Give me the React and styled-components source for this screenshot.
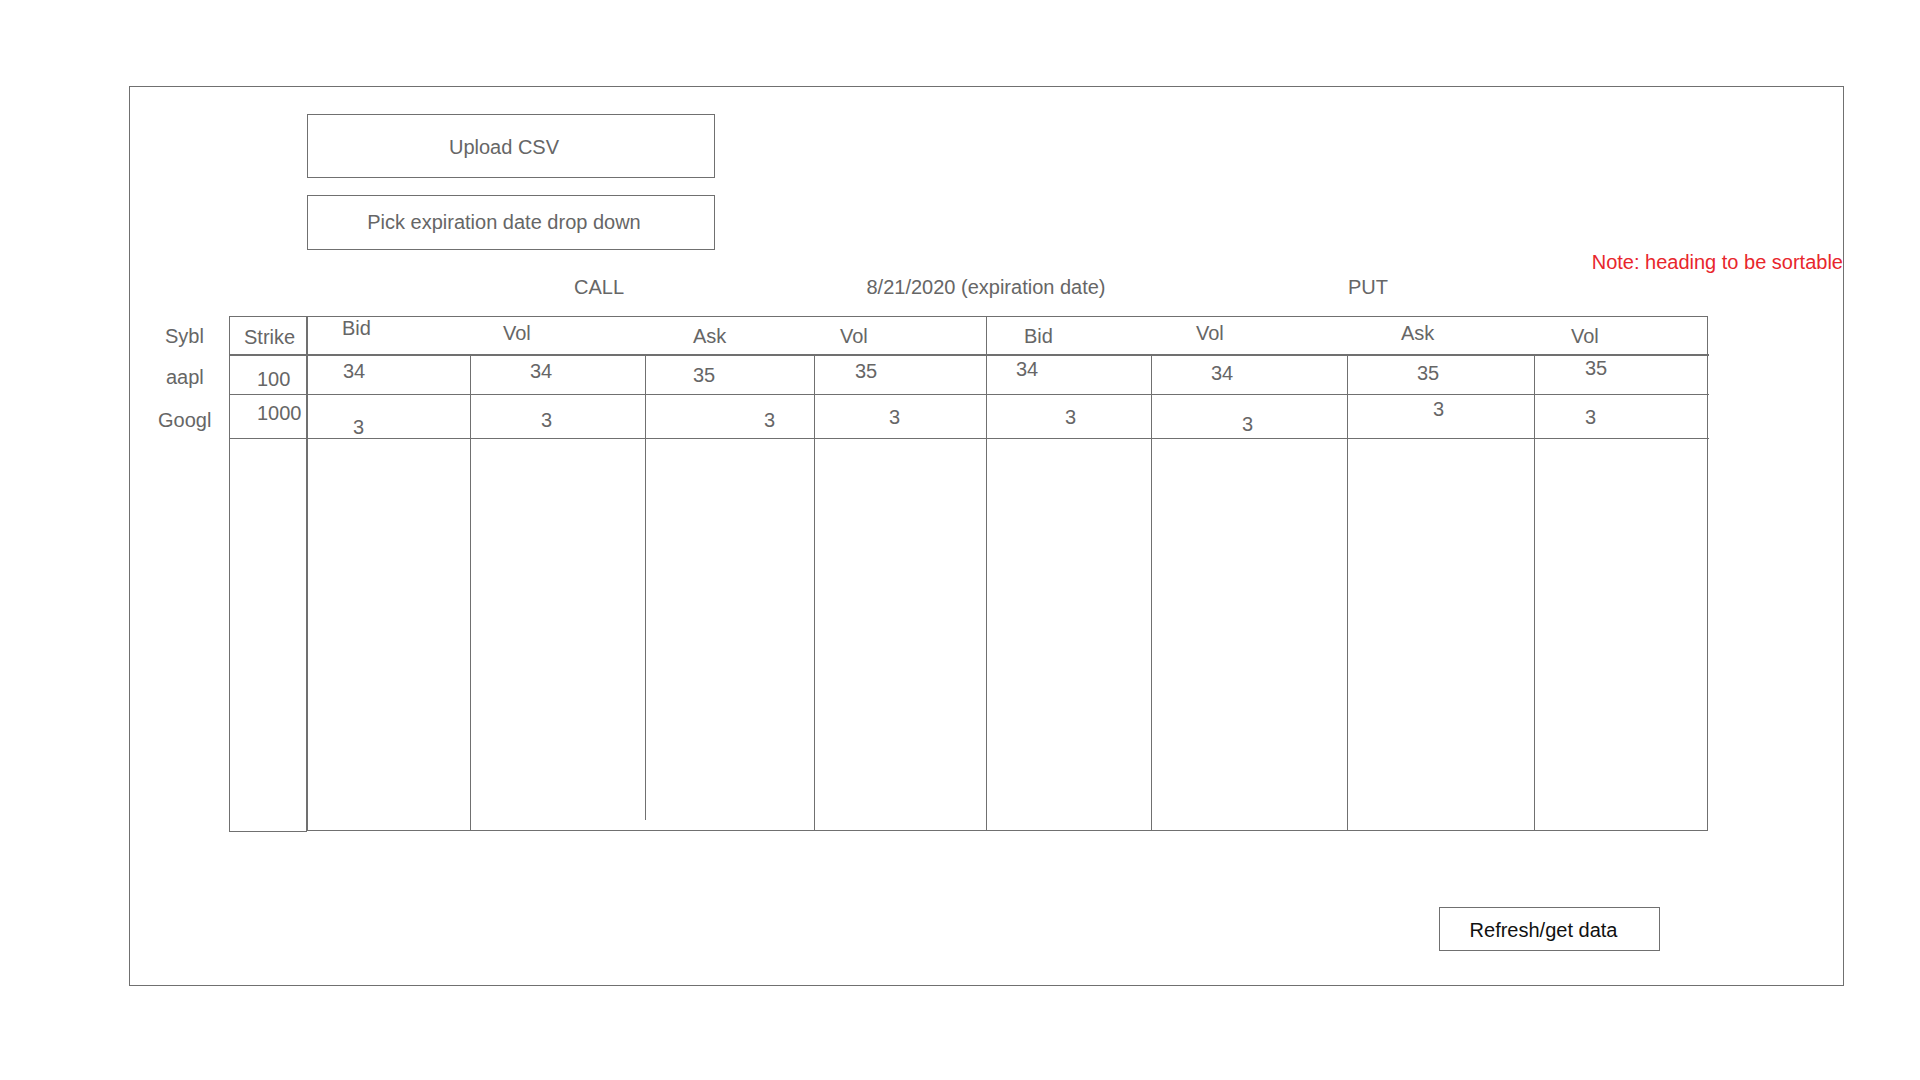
import React from "react";
import styled, { createGlobalStyle } from "styled-components";

const LINE = "#707070";
const TEXT = "#666666";

const GlobalStyle = createGlobalStyle`
  * {
    box-sizing: border-box;
  }
  body {
    margin: 0;
    background: #ffffff;
    font-family: "Liberation Sans", Arial, sans-serif;
  }
`;

// widths of the eight option columns (call bid/vol/ask/vol, put bid/vol/ask/vol)
const columns = [163, 175, 169, 172, 165, 196, 187, 174];

const headers = [
  { label: "Bid", x: 34, y: 0 },
  { label: "Vol", x: 32, y: 5 },
  { label: "Ask", x: 47, y: 8 },
  { label: "Vol", x: 25, y: 8 },
  { label: "Bid", x: 37, y: 8 },
  { label: "Vol", x: 44, y: 5 },
  { label: "Ask", x: 53, y: 5 },
  { label: "Vol", x: 36, y: 8 },
];

const rows = [
  {
    symbol: { label: "aapl", x: 36, y: 11 },
    strike: { label: "100", x: 27, y: 12 },
    cells: [
      { v: "34", x: 35, y: 4 },
      { v: "34", x: 59, y: 4 },
      { v: "35", x: 47, y: 8 },
      { v: "35", x: 40, y: 4 },
      { v: "34", x: 29, y: 2 },
      { v: "34", x: 59, y: 6 },
      { v: "35", x: 69, y: 6 },
      { v: "35", x: 50, y: 1 },
    ],
  },
  {
    symbol: { label: "Googl", x: 28, y: 15 },
    strike: { label: "1000", x: 27, y: 7 },
    cells: [
      { v: "3", x: 45, y: 21 },
      { v: "3", x: 70, y: 14 },
      { v: "3", x: 118, y: 14 },
      { v: "3", x: 74, y: 11 },
      { v: "3", x: 78, y: 11 },
      { v: "3", x: 90, y: 18 },
      { v: "3", x: 85, y: 3 },
      { v: "3", x: 50, y: 11 },
    ],
  },
];

const App = () => {
  return (
    <Page>
      <GlobalStyle />
      <Frame>
        <Controls>
          <ActionBox $height={64} $top={2}>Upload CSV</ActionBox>
          <ActionBox $height={55} $top={0}>Pick expiration date drop down</ActionBox>
        </Controls>
        <Note>Note: heading to be sortable</Note>
        <Captions>
          <Caption>CALL</Caption>
          <Caption>8/21/2020 (expiration date)</Caption>
          <Caption>PUT</Caption>
        </Captions>

        <TableArea>
          <SymbolColumn>
            <Cell $h={39} $x={35} $y={9}>
              Sybl
            </Cell>
            {rows.map((r, i) => (
              <Cell key={r.symbol.label} $h={i === 0 ? 39 : 44} $x={r.symbol.x} $y={r.symbol.y}>
                {r.symbol.label}
              </Cell>
            ))}
          </SymbolColumn>

          <StrikeBox>
            <Cell $h={39} $x={14} $y={9} $bottom={2}>
              Strike
            </Cell>
            {rows.map((r, i) => (
              <Cell key={r.strike.label} $h={i === 0 ? 39 : 44} $x={r.strike.x} $y={r.strike.y} $bottom={1}>
                {r.strike.label}
              </Cell>
            ))}
          </StrikeBox>

          <MainTable $cols={columns}>
            {headers.map((h, i) => (
              <Cell key={"h" + i} $x={h.x} $y={h.y} $bottom={2} $right={i === 3}>
                {h.label}
              </Cell>
            ))}
            {rows.map((r, ri) =>
              r.cells.map((c, i) => (
                <Cell
                  key={ri + "-" + i}
                  $x={c.x}
                  $y={c.y}
                  $bottom={1}
                  $right={i < columns.length - 1}
                >
                  {c.v}
                </Cell>
              ))
            )}
            {columns.map((w, i) => (
              <FillCell key={"f" + i} $right={i < columns.length - 1} $short={i === 1} />
            ))}
          </MainTable>
        </TableArea>

        <Footer>
          <RefreshButton>Refresh/get data</RefreshButton>
        </Footer>
      </Frame>
    </Page>
  );
};

export default App;

const Page = styled.div`
  padding: 86px 0 0 129px;
  width: 1920px;
  height: 1080px;
`;

const Frame = styled.div`
  width: 1715px;
  height: 900px;
  border: 1px solid ${LINE};
  display: flex;
  flex-direction: column;
`;

const Controls = styled.div`
  display: flex;
  flex-direction: column;
  gap: 17px;
  padding: 27px 0 0 177px;
`;

const ActionBox = styled.div`
  width: 408px;
  height: ${(p) => p.$height}px;
  border: 1px solid ${LINE};
  padding: ${(p) => p.$top}px 14px 0 0;
  display: flex;
  align-items: center;
  justify-content: center;
  color: ${TEXT};
  font-size: 20px;
`;

const Note = styled.div`
  margin-top: 1px;
  text-align: right;
  color: #e8262c;
  font-size: 20px;
  line-height: 23px;
`;

const Captions = styled.div`
  display: grid;
  grid-template-columns: 200px 574px 190px;
  padding: 2px 0 0 369px;
  color: ${TEXT};
  font-size: 20px;
  line-height: 23px;
`;

const Caption = styled.div`
  text-align: center;
  white-space: nowrap;
`;

const TableArea = styled.div`
  display: flex;
  margin-top: 17px;
`;

const SymbolColumn = styled.div`
  width: 99px;
  display: flex;
  flex-direction: column;
`;

const StrikeBox = styled.div`
  width: 78px;
  height: 516px;
  border: 1px solid ${LINE};
  display: flex;
  flex-direction: column;
`;

const MainTable = styled.div`
  width: 1401px;
  height: 515px;
  border: 1px solid ${LINE};
  display: grid;
  grid-template-columns: ${(p) => p.$cols.map((w) => w + "px").join(" ")};
  grid-template-rows: 39px 39px 44px 1fr;
`;

const Cell = styled.div`
  height: ${(p) => (p.$h ? p.$h + "px" : "auto")};
  padding: ${(p) => p.$y}px 0 0 ${(p) => p.$x}px;
  color: ${TEXT};
  font-size: 20px;
  line-height: 23px;
  white-space: nowrap;
  border-bottom: ${(p) => (p.$bottom ? `${p.$bottom}px solid ${LINE}` : "none")};
  border-right: ${(p) => (p.$right ? `1px solid ${LINE}` : "none")};
`;

const FillCell = styled.div`
  position: relative;
  border-right: ${(p) => (p.$right && !p.$short ? `1px solid ${LINE}` : "none")};

  &::after {
    content: "";
    display: ${(p) => (p.$short ? "block" : "none")};
    position: absolute;
    top: 0;
    right: 0;
    width: 1px;
    height: calc(100% - 10px);
    background: ${LINE};
  }
`;

const Footer = styled.div`
  padding: 75px 0 0 1309px;
`;

const RefreshButton = styled.div`
  width: 221px;
  height: 44px;
  border: 1px solid ${LINE};
  padding: 3px 12px 0 0;
  display: flex;
  align-items: center;
  justify-content: center;
  color: #111111;
  font-size: 20px;
`;
